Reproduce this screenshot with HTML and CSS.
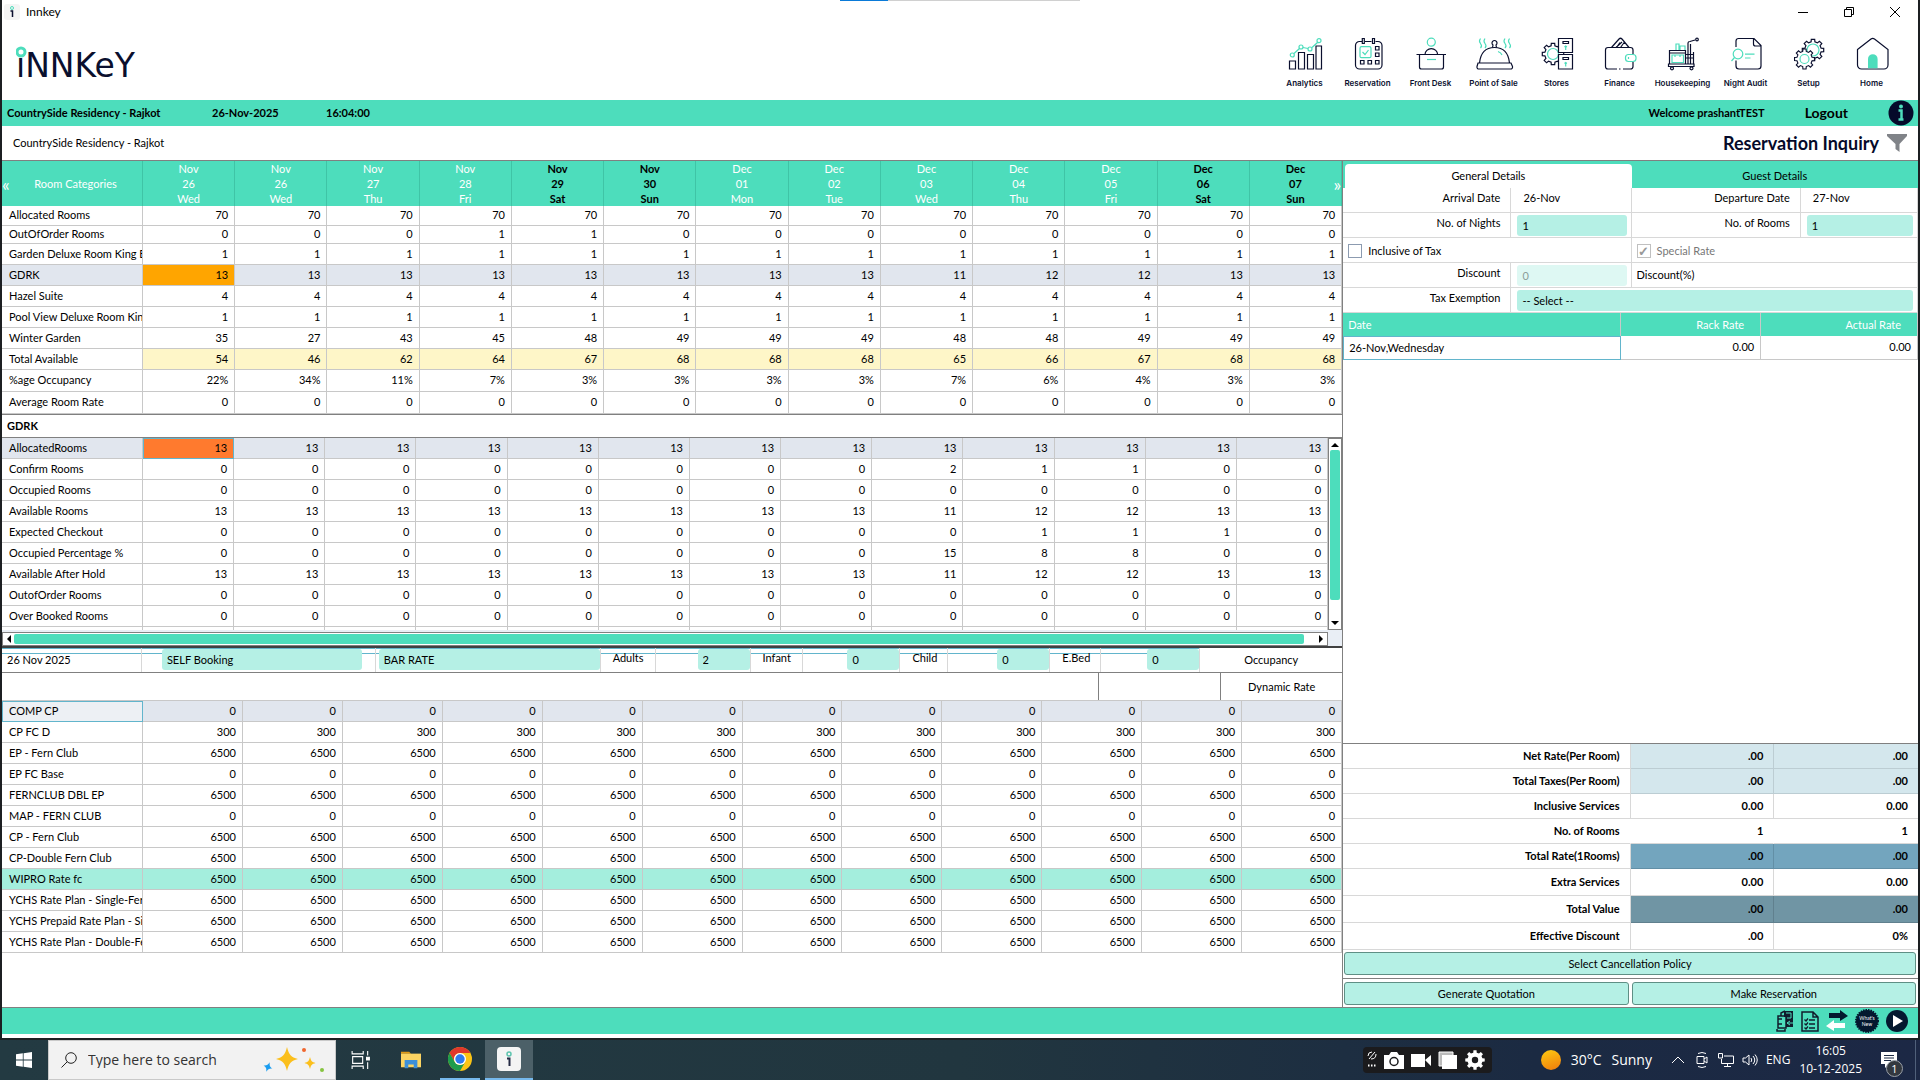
FILE: index.html
```html
<!DOCTYPE html>
<html lang="en">
<head>
    <meta charset="UTF-8">
    <meta name="viewport" content="width=device-width, initial-scale=1.0">
    <title>Innkey</title>
    <link rel="stylesheet" href="styles.css">
</head>
<body>
    <!-- Shared icon shapes -->
    <svg class="defs" width="0" height="0" aria-hidden="true">
        <defs>
            <path id="gear" d="M8.1-1.9L10.7-1.7L10.7 1.7L8.1 1.9L7.1 4.4L8.8 6.4L6.4 8.8L4.4 7.1L1.9 8.1L1.7 10.7L-1.7 10.7L-1.9 8.1L-4.4 7.1L-6.4 8.8L-8.8 6.4L-7.1 4.4L-8.1 1.9L-10.7 1.7L-10.7-1.7L-8.1-1.9L-7.1-4.4L-8.8-6.4L-6.4-8.8L-4.4-7.1L-1.9-8.1L-1.7-10.7L1.7-10.7L1.9-8.1L4.4-7.1L6.4-8.8L8.8-6.4L7.1-4.4Z"/>
            <path id="spark" d="M0-12C2-4 4-2 11 0C4 2 2 4 0 12C-2 4-4 2-11 0C-4-2-2-4 0-12Z"/>
        </defs>
    </svg>

    <div class="window">
        <div class="snap-bar"><span></span></div>

        <!-- Title bar -->
        <div class="title-bar">
            <svg class="app-icon" viewBox="0 0 16 16"><rect width="16" height="16" rx="3" fill="#f4f4f4"/><circle cx="8" cy="4" r="1.500" fill="none" stroke="#4dddbc"/><path d="M6.500 7H8.500V13" fill="none" stroke="#0a0f2e" stroke-width="1.500"/></svg>
            <span>Innkey</span>
            <div class="window-buttons">
                <button aria-label="Minimize"><svg viewBox="0 0 12 12"><path d="M1 6.500h10"/></svg></button>
                <button aria-label="Restore"><svg viewBox="0 0 12 12"><path d="M1.500 3.500h7v7h-7zM3.500 3.500v-2h7v7h-2"/></svg></button>
                <button aria-label="Close"><svg viewBox="0 0 12 12"><path d="M1 1l10 10M11 1L1 11"/></svg></button>
            </div>
        </div>

        <!-- Logo and modules -->
        <header class="header">
            <svg class="logo" viewBox="0 0 136 44" role="img" aria-label="innkey">
                <text x="0" y="33">iNNKeY</text>
                <circle cx="5" cy="8" r="4"/>
            </svg>
            <nav class="modules">
                <a href="#">
                    <svg viewBox="0 0 40 36"><path d="M4.500 25h6v8h-6zM13.500 16.500h6V33h-6zM22.500 18.500h6V33h-6zM31 10h5.500v23H31z"/><g class="mint"><path d="M9 17.500l5.500-5M18 11.500l5 1M27 11.500l5.500-5"/><circle cx="7.300" cy="19" r="2"/><circle cx="16" cy="11" r="2"/><circle cx="25" cy="13" r="2"/><circle cx="34" cy="4.700" r="2"/></g></svg>
                    <span>Analytics</span>
                </a>
                <a href="#">
                    <svg viewBox="0 0 40 36"><path d="M14 5.500h-2.500a4 4 0 0 0-4 4V29a4 4 0 0 0 4 4H30a4 4 0 0 0 4-4V9.500a4 4 0 0 0-4-4h-2.500M17 5.500h6.500M14.300 2.500h2v5h-2zM24.500 2.500h2v5h-2z"/><path d="M27.500 10.500h3.500v3.500h-3.500zM27.500 17h3.500v3.500h-3.500zM27.500 24.500h3.500V28h-3.500zM20 24.500h3.500V28H20zM12.500 24.500H16V28h-3.500z"/><g class="mint"><rect x="12" y="10.700" width="11" height="11" rx="1.500"/><path d="M14.500 16l2.500 2.500 3.500-4.500"/></g></svg>
                    <span>Reservation</span>
                </a>
                <a href="#">
                    <svg viewBox="0 0 40 36"><path d="M14 18.500a6.300 5.800 0 0 1 12.600 0M5.500 18.500H35M8.500 18.500V31a2 2 0 0 0 2 2h20a2 2 0 0 0 2-2V18.500"/><g class="mint"><circle cx="20.300" cy="6.200" r="4"/><path d="M16 23.500h9"/></g></svg>
                    <span>Front Desk</span>
                </a>
                <a href="#">
                    <svg viewBox="0 0 40 36"><path d="M5.500 27C6.500 17 12 11.500 20.500 11.500S34.500 17 35.500 27M4 27h33l1.500 3.500a2 2 0 0 1-2 2.500H5a2 2 0 0 1-2-2.500z"/><path d="M18.500 11.500l.5-2.500a2.500 2.500 0 1 1 3 0l.5 2.500"/><g class="mint"><path d="M6.500 2.500q-2 2.500 0 5t0 4.500M11 2.500q-2 2.500 0 5t0 4.500M31 2.500q-2 2.500 0 5t0 4.500M35.500 2.500q-2 2.500 0 5t0 4.500M24 15.500q3 1 4 3.500"/></g></svg>
                    <span>Point of Sale</span>
                </a>
                <a href="#">
                    <svg viewBox="0 0 40 36"><use href="#gear" x="16" y="18"/><circle class="mint" cx="16" cy="18" r="5.500"/><g fill="#fff"><path d="M21.500 2.500h14v14h-14zM21.500 18.500h14v14.500h-14zM26 5.500h5.500v2H26zM26 21.500h5.500v2H26z"/></g><path class="mint" d="M28.700 14v-4M27.500 11l1.200-1 1.200 1M28.700 30.500v-4M27.500 27.500l1.200-1 1.200 1"/></svg>
                    <span>Stores</span>
                </a>
                <a href="#">
                    <svg viewBox="0 0 40 36"><path d="M33 18v-4a2.500 2.500 0 0 0-2.500-2.500H8A2.500 2.500 0 0 0 5.500 14v16.500A2.500 2.500 0 0 0 8 33h9M19 33h1.500M23 33h7.500a2.500 2.500 0 0 0 2.500-2.500V26M11.500 11.500L19 3q1.500-1.500 3 0l7 8.500M16 11.500l6-5.500M20 6.500l-3.500 5M24.500 6l-4 5.500"/><rect class="mint" x="25.500" y="18.500" width="10.500" height="7" rx="3"/><path class="mint" d="M28.500 21v2"/></svg>
                    <span>Finance</span>
                </a>
                <a href="#">
                    <svg viewBox="0 0 40 36"><path d="M6.500 14.500h16V28h-16zM6.500 17h16M5.500 28H31v2.500H5.500zM25 28V7q0-1.500 2-1.500l5-1.500M27.500 28V8M23 18.500h8M23 22h8M30.500 16v12"/><circle cx="9" cy="32.300" r="1.500"/><circle cx="28.500" cy="32.300" r="1.500"/><circle cx="34" cy="3.500" r="1.300"/><path class="mint" d="M9 19h11.500v7.500H9zM12 19v2M17 19v2M13 14V8h3v6M17 14v-4h5v4"/></svg>
                    <span>Housekeeping</span>
                </a>
                <a href="#">
                    <svg viewBox="0 0 40 36"><path d="M10 11V5a2.500 2.500 0 0 1 2.500-2.500H28L35 9.500V30a3 3 0 0 1-3 3H13a3 3 0 0 1-3-3v-5.500M27.500 2.500V8q0 2 2 2H35"/><g class="mint"><circle cx="12" cy="18" r="4.800"/><path d="M8.500 21.500L5.500 25M19 18.200h9.500M19 22h5.500"/></g></svg>
                    <span>Night Audit</span>
                </a>
                <a href="#">
                    <svg viewBox="0 0 40 36"><use href="#gear" x="24" y="14"/><circle class="mint" cx="24" cy="14" r="6"/><use href="#gear" transform="translate(15.500 23) scale(.93)" fill="#fff"/><circle class="mint" cx="15.500" cy="23" r="4.500"/></svg>
                    <span>Setup</span>
                </a>
                <a href="#">
                    <svg viewBox="0 0 40 36"><path d="M5.500 13.500L19 3q1.700-1.300 3.500 0L36 13.500V29a4 4 0 0 1-4 4H9.500a4 4 0 0 1-4-4z"/><path d="M16 32.300V23a4.800 4.800 0 0 1 9.600 0v9.300z" fill="#4dddbc" stroke="none"/></svg>
                    <span>Home</span>
                </a>
            </nav>
        </header>

        <!-- Property bar -->
        <div class="property-bar">
            <span class="property-name">CountrySide Residency - Rajkot</span>
            <span class="property-date">26-Nov-2025</span>
            <span>16:04:00</span>
            <span class="welcome">Welcome prashantTEST</span>
            <a href="#" class="logout">Logout</a>
            <button class="info" aria-label="Information"><svg viewBox="0 0 26 26"><circle cx="13" cy="13" r="12.500" fill="#050a2a"/><circle cx="13" cy="6.500" r="2" fill="#4dddbc"/><path d="M10.500 10.500H13.500V19M10.500 19.500h5" fill="none" stroke="#4dddbc" stroke-width="2.500"/></svg></button>
        </div>

        <div class="page-title">
            <span>CountrySide Residency - Rajkot</span>
            <h1>Reservation Inquiry</h1>
            <button aria-label="Filter"><svg viewBox="0 0 20 18"><path d="M0 0h20v2l-7.500 8v8l-4-3v-5L0 2z" fill="#808388"/></svg></button>
        </div>

        <main class="content">
            <!-- Availability, room type and rate grids -->
            <section class="grids">
                <div class="availability">
                    <table class="grid" id="availability">
                        <thead></thead>
                        <tbody></tbody>
                    </table>
                    <button class="page-prev" aria-label="Previous">«</button>
                    <button class="page-next" aria-label="Next">»</button>
                </div>

                <h2>GDRK</h2>

                <div class="room-type">
                    <div class="room-type-rows">
                        <table class="grid" id="roomType"><tbody></tbody></table>
                    </div>
                    <div class="scroll-v"><i class="up"></i><b></b><i class="down"></i></div>
                    <div class="scroll-h"><i class="left"></i><b></b><i class="right"></i></div>
                </div>

                <div class="booking-bar">
                    <span class="booking-date">26 Nov 2025</span>
                    <span class="booking-source"><select aria-label="Booking source"><option>SELF Booking</option></select></span>
                    <span class="booking-rate"><select aria-label="Rate type"><option>BAR RATE</option></select></span>
                    <label for="adults">Adults</label>
                    <span class="pax"><input id="adults" value="2"></span>
                    <label for="infant">Infant</label>
                    <span class="pax"><input id="infant" value="0"></span>
                    <label for="child">Child</label>
                    <span class="pax"><input id="child" value="0"></span>
                    <label for="ebed">E.Bed</label>
                    <span class="pax"><input id="ebed" value="0"></span>
                    <button>Occupancy</button>
                </div>
                <div class="rate-bar">
                    <span></span>
                    <button>Dynamic Rate</button>
                </div>

                <table class="grid" id="rates"><tbody></tbody></table>
            </section>

            <!-- Booking details -->
            <aside class="details">
                <div class="tabs">
                    <button class="active">General Details</button>
                    <button>Guest Details</button>
                </div>
                <div class="form">
                    <span class="label">Arrival Date</span>
                    <span class="value">26-Nov</span>
                    <span class="label">Departure Date</span>
                    <span class="value">27-Nov</span>

                    <label class="label" for="nights">No. of Nights</label>
                    <span class="field"><input id="nights" value="1"></span>
                    <label class="label" for="rooms">No. of Rooms</label>
                    <span class="field"><input id="rooms" value="1"></span>

                    <label class="check"><input type="checkbox">Inclusive of Tax</label>
                    <label class="check disabled"><input type="checkbox" checked disabled>Special Rate</label>

                    <label class="label" for="discount">Discount</label>
                    <span class="field"><input id="discount" value="0" disabled></span>
                    <span class="discount-type">Discount(%)</span>

                    <label class="label" for="exemption">Tax Exemption</label>
                    <span class="field wide"><select id="exemption"><option>-- Select --</option></select></span>
                </div>

                <table class="day-rates">
                    <thead>
                        <tr><th>Date</th><th>Rack Rate</th><th>Actual Rate</th></tr>
                    </thead>
                    <tbody>
                        <tr><td>26-Nov,Wednesday</td><td>0.00</td><td>0.00</td></tr>
                    </tbody>
                </table>

                <table class="summary">
                    <tbody>
                        <tr class="light"><th>Net Rate(Per Room)</th><td>.00</td><td>.00</td></tr>
                        <tr class="light"><th>Total Taxes(Per Room)</th><td>.00</td><td>.00</td></tr>
                        <tr><th>Inclusive Services</th><td>0.00</td><td>0.00</td></tr>
                        <tr class="plain"><th>No. of Rooms</th><td>1</td><td>1</td></tr>
                        <tr class="blue"><th>Total Rate(1Rooms)</th><td>.00</td><td>.00</td></tr>
                        <tr class="tall"><th>Extra Services</th><td>0.00</td><td>0.00</td></tr>
                        <tr class="tall slate"><th>Total Value</th><td>.00</td><td>.00</td></tr>
                        <tr class="tall"><th>Effective Discount</th><td>.00</td><td>0%</td></tr>
                    </tbody>
                </table>
                <div class="policy"><button>Select Cancellation Policy</button></div>
                <div class="actions">
                    <button>Generate Quotation</button>
                    <button>Make Reservation</button>
                </div>
            </aside>
        </main>

        <!-- Footer shortcuts -->
        <footer class="footer">
            <svg viewBox="0 0 24 24"><path d="M4 7h8v12H4zM4 10h4M4 15h4M7 7V4l4-2M3 20v2h8v-2" fill="none" stroke="#101c2c" stroke-width="1.500"/><path d="M10 2h9v16h-7V8h-2z" fill="#101c2c"/><path d="M12 4h5v5h-4M13 14h6M13 14l3-2M13 14l3 2" stroke="#4dddbc" fill="none"/></svg>
            <svg viewBox="0 0 24 24"><path d="M4 3h11l5 5v14H4zM15 3v5h5" fill="none" stroke="#101c2c" stroke-width="1.500"/><path d="M11 11h6M11 15h6M11 19h6M6.500 10.500l1.500 1.500 2-2.500M6.500 14.500L8 16l2-2.500M6.500 18.500L8 20l2-2.500" fill="none" stroke="#101c2c" stroke-width="1.300"/></svg>
            <svg viewBox="0 0 24 24"><path d="M4 4h11V1l8 6-8 5V9H4z" fill="#04182f"/><path d="M20 14H9v-3l-8 6 8 5v-3h11z" fill="#fff"/></svg>
            <svg class="whats-new" viewBox="0 0 24 24"><circle cx="12" cy="12" r="11" fill="#04182f" stroke="#04182f" stroke-width="2" stroke-dasharray="1.500 1"/><text x="12" y="11">What's</text><text x="12" y="17">New</text></svg>
            <svg viewBox="0 0 24 24"><circle cx="12" cy="12" r="11" fill="#04182f"/><path d="M8 6l10 6-10 6z" fill="#fff"/></svg>
        </footer>
    </div>

    <!-- Taskbar -->
    <div class="taskbar">
        <button class="start" aria-label="Start"><svg viewBox="0 0 16 16"><path d="M0 2.300L6.800 1.300V7.600H0zM7.600 1.200L16 0v7.600H7.600zM0 8.400h6.800v6.300L0 13.700zM7.600 8.400H16V16l-8.400-1.200z" fill="#fff"/></svg></button>
        <label class="search">
            <svg viewBox="0 0 16 16"><circle cx="10" cy="6" r="5.300"/><path d="M6.300 9.700L.5 15.500"/></svg>
            <input type="text" placeholder="Type here to search">
            <svg class="sparks" viewBox="0 0 62 28"><use href="#spark" x="24" y="13" fill="#fbbf1c"/><use href="#spark" transform="translate(47 17) scale(.5)" fill="#fbbf1c"/><use href="#spark" transform="translate(5 21) rotate(20) scale(.42)" fill="#1a9df0"/><circle cx="41" cy="4" r="2" fill="#f0662e"/><circle cx="59" cy="24" r="2" fill="#86c440"/></svg>
        </label>
        <button aria-label="Task view"><svg viewBox="0 0 18 18" class="line"><path d="M1 1v2.500h10V1M1 17v-2.500h10V17M1.500 6h9v6h-9zM15 1v4M15 11v6"/><path d="M14 6.500h2.500V9H14z" fill="#fff"/></svg></button>
        <button aria-label="File Explorer"><svg viewBox="0 0 22 20"><path d="M0 1h9l2 2H0z" fill="#e09a16"/><path d="M0 3h22v15H0z" fill="#fcd462"/><path d="M4 10h14v9h-4v-4H8v4H4z" fill="#3c8fd8"/></svg></button>
        <button class="running" aria-label="Chrome"><svg viewBox="0 0 24 24"><circle cx="12" cy="12" r="12" fill="#fbc416"/><path d="M1.600 6A12 12 0 0 1 22.400 6H12a6 6 0 0 0-5.200 9z" fill="#e0382c"/><path d="M1.600 6A12 12 0 0 0 12 24l5.200-9a6 6 0 0 1-10.400 0z" fill="#1e9c4c"/><circle cx="12" cy="12" r="6" fill="#fff"/><circle cx="12" cy="12" r="4.700" fill="#2f7bf0"/></svg></button>
        <button class="running current" aria-label="Innkey"><svg viewBox="0 0 24 24"><rect width="24" height="24" rx="4" fill="#f4f4f4"/><circle cx="12" cy="7" r="2" fill="none" stroke="#5cc4ae" stroke-width="1.500"/><path d="M10 11.500h2.500V19" fill="none" stroke="#252a45" stroke-width="2"/></svg></button>

        <div class="recorder">
            <svg class="line narrow" viewBox="0 0 10 20"><path d="M2 9L8 2M1 6q0-4 4-4M9 4q0 5-5 5"/><path d="M1 15.500h1.500M4 15.500h1.500M7 15.500h1.500" stroke-width="2"/></svg>
            <svg viewBox="0 0 20 20"><path d="M0 5h5l2-3h6l2 3h5v14H0z" fill="#fff"/><circle cx="10" cy="11.500" r="4" fill="none" stroke="#1b1b1d" stroke-width="1.500"/></svg>
            <svg viewBox="0 0 20 20"><path d="M0 4h14v13H0zM14 10l6-5v11z" fill="#fff"/></svg>
            <svg viewBox="0 0 20 20"><path d="M1 2h14v14H1z" fill="#bbb" stroke="#fff"/><path d="M4 5h15v14H4z" fill="#fff"/></svg>
            <svg viewBox="-11 -11 22 22"><use href="#gear" fill="#fff"/><circle r="3.500" fill="#1b1b1d"/></svg>
        </div>
        <div class="weather">
            <span class="sun"></span>
            <span>30°C</span>
            <span>Sunny</span>
        </div>
        <div class="tray">
            <svg class="line" viewBox="0 0 16 16"><path d="M2 11l6-6 6 6"/></svg>
            <svg class="line" viewBox="0 0 16 16"><path d="M3 4.500h7v7H3zM10 7l3-2v6l-3-2M4 1.500q4-2 8 0M4 14.500q4 2 8 0"/></svg>
            <svg class="line" viewBox="0 0 16 16"><path d="M6 4h9.500v7.500H3.500V7M6 14.500h7M9.500 12v2.500M.5 1.500h4V6h-4z"/></svg>
            <svg class="line" viewBox="0 0 16 16"><path d="M1 6h2.500L7 3v10l-3.500-3H1zM9 6q1.500 2 0 4M11 4q3.500 4 0 8M13 2.500q4.500 5.500 0 11"/></svg>
            <span>ENG</span>
        </div>
        <div class="clock"><span>16:05</span><span>10-12-2025</span></div>
        <button class="notifications" aria-label="Notifications">
            <svg viewBox="0 0 16 16"><path d="M0 0h16v12H8l-4 4v-4H0z" fill="#fff"/><path d="M3 3.500h10M3 6h10M3 8.500h7" stroke="#1c2a44"/></svg>
            <span>1</span>
        </button>
    </div>

    <script src="app.js"></script>
</body>
</html>
```

FILE: styles.css
```css
/* General */
* {
    box-sizing: border-box;
}
body {
    margin: 0;
    min-height: 100vh;
    display: flex;
    flex-direction: column;
    background: #1c1f22;
    color: #000;
    font-family: Lato, "Noto Sans", sans-serif;
    font-size: 11px;
    line-height: 16px;
}
button, input, select {
    font: inherit;
    color: inherit;
    margin: 0;
    padding: 0;
    border: none;
    border-radius: 0;
    background: none;
    appearance: none;
}
button {
    cursor: pointer;
}
svg {
    display: block;
}
.defs {
    position: absolute;
}
.window {
    flex: 1;
    display: flex;
    flex-direction: column;
    margin: 0 2px 2px;
    padding-bottom: 4px;
    background: #fff;
}

/* Title bar */
.snap-bar {
    position: absolute;
    top: 0;
    left: 840px;
    width: 240px;
    height: 1px;
    background: #d0d0d0;
}
.snap-bar span {
    display: block;
    width: 48px;
    height: 1px;
    background: #0a7ad8;
}
.title-bar {
    display: flex;
    align-items: center;
    gap: 6px;
    height: 24px;
    padding-left: 2px;
    font-size: 12px;
}
.app-icon {
    width: 16px;
    height: 16px;
}
.window-buttons {
    display: flex;
    gap: 34px;
    margin-left: auto;
    padding-right: 17px;
}
.window-buttons svg {
    width: 12px;
    height: 12px;
    fill: none;
    stroke: #000;
}

/* Header */
.header {
    display: flex;
    justify-content: space-between;
    height: 76px;
    padding: 12px 15px 0 14px;
}
.logo {
    width: 136px;
    height: 44px;
    margin-top: 8px;
}
.logo text {
    font-family: "DejaVu Sans", sans-serif;
    font-size: 33px;
    fill: #0a0f2e;
}
.logo circle {
    fill: #fff;
    stroke: #4dddbc;
    stroke-width: 3;
}
.modules {
    display: flex;
}
.modules a {
    display: flex;
    flex-direction: column;
    align-items: center;
    width: 63px;
    color: #0a0f2e;
    font: 600 8px/12px Inter, sans-serif;
    white-space: nowrap;
    text-decoration: none;
}
.modules svg {
    width: 40px;
    height: 36px;
    margin-bottom: 5px;
    fill: none;
    stroke: #0a0f2e;
    stroke-width: 1.2;
}
.modules .mint {
    stroke: #4dddbc;
}

/* Property bar */
.property-bar {
    display: flex;
    align-items: center;
    height: 26px;
    padding: 0 4px 0 5px;
    background: #4dddbc;
    font-weight: bold;
}
.property-name {
    width: 205px;
}
.property-date {
    width: 114px;
}
.welcome {
    margin-left: auto;
}
.logout {
    margin: 0 40px;
    color: #000;
    font-size: 14px;
    text-decoration: none;
}
.info svg {
    width: 26px;
    height: 26px;
}
.page-title {
    display: flex;
    align-items: center;
    height: 34px;
    padding: 0 11px;
}
.page-title h1 {
    margin: 0 8px 0 auto;
    color: #050a2a;
    font-size: 18px;
}
.page-title svg {
    width: 20px;
    height: 18px;
}

/* Content */
.content {
    flex: 1;
    display: grid;
    grid-template-columns: minmax(0, 7fr) minmax(0, 3fr);
    border-top: 1px solid #808080;
    border-bottom: 1px solid #808080;
}
.grids {
    border-right: 1px solid #808080;
}
.grid {
    width: 100%;
    border-spacing: 0;
    table-layout: fixed;
}
.grid th, .grid td {
    height: 21px;
    padding: 0 6px 1px;
    border: 0 solid #c8c8c8;
    border-width: 0 1px 1px 0;
    font-weight: normal;
    text-align: right;
    white-space: nowrap;
    overflow: hidden;
}
.grid th:first-child {
    width: 141px;
    padding-right: 0;
    padding-left: 7px;
    text-align: left;
}
.availability {
    position: relative;
}
.availability thead th, .availability thead th:first-child {
    height: 45px;
    padding: 0;
    background: #4dddbc;
    border-color: #3fc4a6;
    border-bottom: none;
    color: #fff;
    line-height: 15px;
    text-align: center;
}
.availability thead th:first-child {
    padding-left: 7px;
}
.availability thead .weekend {
    color: #000;
    font-weight: bold;
}
.page-prev, .page-next {
    position: absolute;
    top: 15px;
    color: #fff;
    font-size: 18px;
}
.page-prev {
    left: 0;
}
.page-next {
    right: 1px;
}
.grid .h20 > * {
    height: 20px;
}
.grid .h18 > * {
    height: 18px;
}
.grid .h22 > * {
    height: 22px;
}
.grid .selected > * {
    background: #e1e6ee;
}
.availability .selected th + td {
    background: #ffa500;
}
.availability .total td {
    background: #fef6c8;
}
.grids h2 {
    margin: 0;
    height: 24px;
    padding: 3px 5px;
    border: solid #808080;
    border-width: 1px 0;
    font-size: 11px;
    line-height: 16px;
}

/* Room type grid with its scroll bars */
.room-type {
    display: grid;
    grid-template-columns: minmax(0, 1fr) 14px;
    background: #e9eef5;
    border-bottom: 2px solid #404040;
}
.room-type-rows {
    height: 192px;
    overflow: hidden;
    background: #fff;
}
.room-type .selected th + td {
    background: #ff7a2e;
    border: 1px solid #62b5cc;
}
.scroll-v, .scroll-h {
    display: flex;
    align-items: center;
    background: #fff;
    border: 1px solid #808080;
}
.scroll-v {
    flex-direction: column;
    padding: 4px 0;
}
.scroll-h {
    height: 14px;
    margin-top: 2px;
    padding: 0 4px;
}
.scroll-v b {
    width: 10px;
    height: 150px;
    margin: 3px 0 auto;
    border-radius: 2px;
    background: #4dddbc;
}
.scroll-h b {
    width: 98%;
    height: 10px;
    margin: 0 auto 0 3px;
    border-radius: 2px;
    background: #4dddbc;
}
.room-type i {
    border: 4px solid transparent;
}
.room-type .up {
    border-top: 0;
    border-bottom-color: #000;
}
.room-type .down {
    border-bottom: 0;
    border-top-color: #000;
}
.room-type .left {
    border-left: 0;
    border-right-color: #000;
}
.room-type .right {
    border-right: 0;
    border-left-color: #000;
}

/* Booking bar */
.booking-bar {
    display: grid;
    grid-template-columns: 140fr 234fr 225fr 55fr 95fr 52fr 98fr 48fr 102fr 51fr 99fr 142fr;
    height: 25px;
    border-bottom: 1px solid #808080;
}
.booking-bar > * {
    min-width: 0;
    padding-top: 1px;
    border-right: 1px solid #d8d8d8;
    box-shadow: inset 0 1px #62b5cc, inset 0 5px #fff, inset 0 6px #62b5cc;
}
.booking-bar label {
    padding: 2px 0 0 12px;
}
.booking-bar .booking-date {
    padding: 4px 0 0 5px;
}
.booking-bar button {
    padding: 0;
    border: none;
    box-shadow: none;
}
.booking-bar .booking-source {
    padding-left: 20px;
    padding-right: 13px;
}
.booking-bar .booking-rate {
    padding-left: 3px;
}
.booking-bar select, .booking-bar input, .form input:not([type=checkbox]), .form select {
    display: block;
    width: 100%;
    height: 21px;
    padding: 0 5px;
    border-radius: 3px;
    background: #b5f0e5;
}
.booking-bar .pax input {
    width: 52px;
    margin-left: auto;
}
.rate-bar {
    display: flex;
    justify-content: flex-end;
    height: 28px;
    border-bottom: 1px solid #c8c8c8;
}
.rate-bar span, .rate-bar button {
    width: 122px;
    border-left: 1px solid #808080;
}
#rates .selected th {
    background: #edf0f4;
    border: 1px solid #62b5cc;
    padding-left: 6px;
}
#rates .picked > * {
    background: #a4eedd;
}

/* Details panel */
.details {
    display: flex;
    flex-direction: column;
}
.tabs {
    display: grid;
    grid-template-columns: 1fr 1fr;
    height: 27px;
    padding: 3px 0 0 2px;
    background: #4dddbc;
}
.tabs .active {
    background: #fff;
    border-radius: 4px 4px 0 0;
}
.form {
    display: grid;
    grid-template-columns: 168fr 120fr 169fr 117fr;
    grid-auto-rows: 25px;
}
.form > * {
    padding: 2px 5px;
    border: 0 solid #d8d8d8;
    border-width: 0 1px 1px 0;
}
.form .label {
    padding-right: 10px;
    text-align: right;
}
.form .value {
    padding-left: 12px;
}
.form .field {
    padding: 2px 4px 0 6px;
}
.form .wide {
    grid-column: span 3;
}
.form input:disabled {
    background: #def8f3;
    color: #8b9d99;
}
.form .check, .form .discount-type {
    grid-column: span 2;
    display: flex;
    align-items: center;
    gap: 6px;
}
.form .check {
    padding-top: 4px;
}
.form .disabled {
    color: #777;
}
.form .check input {
    width: 14px;
    height: 14px;
    border: 1px solid #8c9bb0;
    background: #fff;
}
.form .check input:checked {
    border-color: #c0c0c0;
    color: #999;
    font-size: 13px;
    line-height: 12px;
    text-align: center;
}
.check input:checked::before {
    content: "✓";
    font-weight: bold;
}

/* Rates for each day */
.day-rates {
    width: 100%;
    border-spacing: 0;
    table-layout: fixed;
}
.day-rates th {
    height: 23px;
    padding: 0 16px 0 5px;
    background: #4dddbc;
    border-right: 1px solid #c8c8c8;
    color: #fff;
    font-weight: normal;
    text-align: right;
}
.day-rates td {
    height: 24px;
    padding: 0 6px 1px;
    border: 0 solid #c8c8c8;
    border-width: 0 1px 1px 0;
    text-align: right;
}
.day-rates th:first-child, .day-rates td:first-child {
    width: 278px;
    text-align: left;
}
.day-rates th:nth-child(2) {
    width: 140px;
}
.day-rates td:first-child {
    padding-left: 5px;
    border: 1px solid #62b5cc;
}

/* Totals */
.summary {
    width: 100%;
    margin-top: auto;
    border-top: 1px solid #808080;
    border-spacing: 0;
    table-layout: fixed;
    font-weight: bold;
}
.summary th, .summary td {
    height: 25px;
    padding: 0 10px 1px;
    border: 0 solid #d8d8d8;
    border-width: 0 1px 1px 0;
    text-align: right;
}
.summary td:last-child {
    border-right: none;
    width: 25%;
}
.summary th {
    width: 50%;
}
.summary .tall > * {
    height: 27px;
}
.summary .plain > * {
    border-right-color: transparent;
}
.summary .light td {
    background: #d4e7ed;
    border-color: #bccdd3;
}
.summary .blue td {
    background: #73a5be;
    border-color: #628fa6;
}
.summary .slate td {
    background: #7095a4;
    border-color: #60808e;
}
.policy, .actions {
    display: flex;
    gap: 3px;
    padding: 2px 2px 3px 1px;
}
.policy {
    border-bottom: 1px solid #808080;
}
.actions {
    padding-top: 3px;
    padding-bottom: 2px;
}
.policy button, .actions button {
    flex: 1;
    height: 23px;
    background: #b5f0e5;
    border: 1px solid #5f8f85;
    border-radius: 3px;
}

/* Footer */
.footer {
    display: flex;
    justify-content: flex-end;
    align-items: center;
    height: 26px;
    padding-right: 9px;
    background: #4dddbc;
}
.footer svg {
    width: 24px;
    height: 24px;
}
.footer svg:nth-child(3) {
    margin-left: 3px;
}
.footer svg:nth-child(n+4) {
    margin-left: 6px;
}
.whats-new text {
    fill: #fff;
    font-size: 5px;
    text-anchor: middle;
}

/* Taskbar */
.taskbar {
    display: flex;
    align-items: center;
    height: 40px;
    background: linear-gradient(90deg, #233a42, #21363f 50%, #1b2a42 80%, #1c2845);
    color: #fff;
    font-family: "Open Sans", sans-serif;
    font-size: 12px;
}
.taskbar > button {
    display: flex;
    justify-content: center;
    align-items: center;
    width: 50px;
    height: 40px;
}
.taskbar > button svg {
    width: 20px;
    height: 20px;
}
.taskbar .start {
    width: 48px;
}
.taskbar .start svg {
    width: 16px;
    height: 16px;
}
.taskbar > .running {
    border-bottom: 2px solid #76b9ed;
    width: 40px;
    margin: 0 5px 0 4px;
}
.taskbar > .running svg {
    width: 24px;
    height: 24px;
}
.taskbar > .current {
    width: 48px;
    margin: 0;
    background: #4c6068;
}
.line {
    fill: none;
    stroke: #fff;
}
.search {
    display: flex;
    align-items: center;
    gap: 11px;
    width: 288px;
    height: 40px;
    padding: 0 10px 0 12px;
    background: #f2f2f2;
    border: 1px solid #c9c9c9;
    font-size: 14px;
}
.search svg {
    width: 16px;
    height: 16px;
    fill: none;
    stroke: #222;
}
.search input {
    flex: 1;
    min-width: 0;
}
.search input::placeholder {
    color: #333;
    opacity: 1;
}
.search .sparks {
    width: 62px;
    height: 28px;
    stroke: none;
}
.recorder {
    display: flex;
    align-items: center;
    gap: 7px;
    margin-left: auto;
    padding: 3px 7px 3px 4px;
    border-radius: 4px;
    background: #1b1b1d;
}
.recorder svg {
    width: 20px;
    height: 20px;
}
.recorder .narrow {
    width: 10px;
}
.weather {
    display: flex;
    align-items: center;
    gap: 10px;
    margin-left: 49px;
    font-size: 14px;
}
.sun {
    width: 20px;
    height: 20px;
    border-radius: 50%;
    background: linear-gradient(160deg, #fccb12, #f07a0c);
}
.tray {
    display: flex;
    align-items: center;
    gap: 8px;
    margin-left: 18px;
}
.tray svg {
    width: 16px;
    height: 16px;
}
.clock {
    display: flex;
    flex-direction: column;
    align-items: center;
    margin-left: 9px;
    line-height: 18px;
}
.taskbar > .notifications {
    position: relative;
    margin-right: 4px;
    border-right: 1px solid #50607a;
    width: 54px;
}
.taskbar > .notifications svg {
    width: 16px;
    height: 16px;
}
.notifications span {
    position: absolute;
    right: 12px;
    bottom: 3px;
    width: 17px;
    height: 17px;
    border: 1px solid #9aa0a8;
    border-radius: 50%;
    background: #33383f;
    font-size: 11px;
    line-height: 15px;
}
```

FILE: app.js
```js
const days = [
    "Nov 26 Wed", "Nov 26 Wed", "Nov 27 Thu", "Nov 28 Fri", "Nov 29 Sat",
    "Nov 30 Sun", "Dec 01 Mon", "Dec 02 Tue", "Dec 03 Wed", "Dec 04 Thu",
    "Dec 05 Fri", "Dec 06 Sat", "Dec 07 Sun"
];

// [label, values, row class]
const availability = [
    ["Allocated Rooms", "70 70 70 70 70 70 70 70 70 70 70 70 70", "h20"],
    ["OutOfOrder Rooms", "0 0 0 1 1 0 0 0 0 0 0 0 0", "h18"],
    ["Garden Deluxe Room King Bed", "1 1 1 1 1 1 1 1 1 1 1 1 1"],
    ["GDRK", "13 13 13 13 13 13 13 13 11 12 12 13 13", "selected"],
    ["Hazel Suite", "4 4 4 4 4 4 4 4 4 4 4 4 4"],
    ["Pool View Deluxe Room King Bed", "1 1 1 1 1 1 1 1 1 1 1 1 1"],
    ["Winter Garden", "35 27 43 45 48 49 49 49 48 48 49 49 49"],
    ["Total Available", "54 46 62 64 67 68 68 68 65 66 67 68 68", "total"],
    ["%age Occupancy", "22% 34% 11% 7% 3% 3% 3% 3% 7% 6% 4% 3% 3%", "h22"],
    ["Average Room Rate", "0 0 0 0 0 0 0 0 0 0 0 0 0", "h22"]
];

const roomType = [
    ["AllocatedRooms", "13 13 13 13 13 13 13 13 13 13 13 13 13", "selected"],
    ["Confirm Rooms", "0 0 0 0 0 0 0 0 2 1 1 0 0"],
    ["Occupied Rooms", "0 0 0 0 0 0 0 0 0 0 0 0 0"],
    ["Available Rooms", "13 13 13 13 13 13 13 13 11 12 12 13 13"],
    ["Expected Checkout", "0 0 0 0 0 0 0 0 0 1 1 1 0"],
    ["Occupied Percentage %", "0 0 0 0 0 0 0 0 15 8 8 0 0"],
    ["Available After Hold", "13 13 13 13 13 13 13 13 11 12 12 13 13"],
    ["OutofOrder Rooms", "0 0 0 0 0 0 0 0 0 0 0 0 0"],
    ["Over Booked Rooms", "0 0 0 0 0 0 0 0 0 0 0 0 0"],
    ["", "             "]
];

const rates = [
    ["COMP CP", 0, "selected"],
    ["CP FC D", 300],
    ["EP - Fern Club", 6500],
    ["EP FC Base", 0],
    ["FERNCLUB DBL EP", 6500],
    ["MAP - FERN CLUB", 0],
    ["CP - Fern Club", 6500],
    ["CP-Double Fern Club", 6500],
    ["WIPRO Rate fc", 6500, "picked"],
    ["YCHS Rate Plan - Single-Fern Club", 6500],
    ["YCHS Prepaid Rate Plan - Single", 6500],
    ["YCHS Rate Plan - Double-Fern Club", 6500]
];

function row(label, values, cls) {
    const cells = values.map(value => `<td>${value}</td>`).join("");
    return `<tr class="${cls || ""}"><th>${label}</th>${cells}</tr>`;
}

function fill(id, rows) {
    document.querySelector(`#${id} tbody`).innerHTML = rows.join("");
}

const head = days.map(day => {
    const weekend = /Sat|Sun/.test(day) ? "weekend" : "";
    return `<th class="${weekend}">${day.split(" ").join("<br>")}</th>`;
}).join("");
document.querySelector("#availability thead").innerHTML = `<tr><th>Room Categories</th>${head}</tr>`;

fill("availability", availability.map(r => row(r[0], r[1].split(" "), r[2])));
fill("roomType", roomType.map(r => row(r[0], r[1].split(" ").slice(0, 13), r[2])));
fill("rates", rates.map(r => row(r[0], Array(12).fill(r[1]), r[2])));
```
